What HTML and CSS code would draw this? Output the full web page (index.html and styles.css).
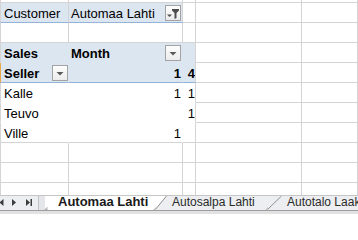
FILE: index.html
```html
<!DOCTYPE html>
<html>
<head>
<meta charset="utf-8">
<link rel="stylesheet" href="styles.css">
</head>
<body>
<div class="sheet">
  <div class="row top"><div class="c"></div><div class="c"></div><div class="c"></div><div class="c"></div><div class="c"></div></div>
  <div class="row">
    <div class="c pv pv-line">Customer</div>
    <div class="c pv pv-line btn-cell">Automaa Lahti
      <span class="dd"><svg width="14" height="14" viewBox="0 0 14 14"><polygon points="6,3 13,3 13,4.5 10.5,7 10.5,12 8.5,13 8.5,7 6,4.5" fill="#4d4d4d"/><polygon points="1,8.5 6,8.5 3.5,11" fill="#4d4d4d"/></svg></span>
    </div>
    <div class="c"></div><div class="c"></div><div class="c"></div>
  </div>
  <div class="row"><div class="c"></div><div class="c"></div><div class="c"></div><div class="c"></div><div class="c"></div></div>
  <div class="row">
    <div class="c pv nr nb b">Sales</div>
    <div class="c pv nr nb b btn-cell">Month
      <span class="dd"><svg width="14" height="14" viewBox="0 0 14 14"><polygon points="3.5,6 10.5,6 7,9.5" fill="#595959"/></svg></span>
    </div>
    <div class="c pv nb"></div><div class="c"></div><div class="c"></div>
  </div>
  <div class="row">
    <div class="c pv nr pv-line b sel btn-cell seller">Seller
      <span class="dd"><svg width="14" height="14" viewBox="0 0 14 14"><polygon points="3.5,6 10.5,6 7,9.5" fill="#595959"/></svg></span>
    </div>
    <div class="c pv nr pv-line b num">1</div>
    <div class="c pv pv-line b num0">4</div>
    <div class="c"></div><div class="c"></div>
  </div>
  <div class="row">
    <div class="c nr nb">Kalle</div>
    <div class="c nr nb num">1</div>
    <div class="c nb num0">1</div>
    <div class="c"></div><div class="c"></div>
  </div>
  <div class="row">
    <div class="c nr nb">Teuvo</div>
    <div class="c nr nb num"></div>
    <div class="c nb num0">1</div>
    <div class="c"></div><div class="c"></div>
  </div>
  <div class="row">
    <div class="c nr">Ville</div>
    <div class="c nr num">1</div>
    <div class="c num0"></div>
    <div class="c"></div><div class="c"></div>
  </div>
  <div class="row"><div class="c"></div><div class="c"></div><div class="c"></div><div class="c"></div><div class="c"></div></div>
  <div class="row"><div class="c"></div><div class="c"></div><div class="c"></div><div class="c"></div><div class="c"></div></div>
  <div class="row last"><div class="c"></div><div class="c"></div><div class="c"></div><div class="c"></div><div class="c"></div></div>
</div>
<div class="tabbar">
  <svg class="nav" width="38" height="14" viewBox="0 0 38 14">
    <polygon points="3.5,3 3.5,10 -0.5,6.5" fill="#3c3c3c"/>
    <polygon points="12,3 12,10 16,6.5" fill="#3c3c3c"/>
    <polygon points="26,3 26,10 30,6.5" fill="#3c3c3c"/>
    <rect x="30.5" y="3" width="1.5" height="7" fill="#3c3c3c"/>
  </svg>
  <svg class="split" width="10" height="14" viewBox="0 0 10 14">
    <rect x="0" y="0" width="7" height="14" fill="#e4e6e9"/>
    <rect x="0" y="0" width="1" height="14" fill="#c2c2c2"/>
    <rect x="7" y="0" width="3" height="14" fill="#ffffff"/>
    <polygon points="6,14 9.5,14 9.5,10.5" fill="#b9b9b9"/>
  </svg>
  <div class="tab active">Automaa Lahti</div>
  <svg class="slant" width="14" height="14" viewBox="0 0 14 14">
    <polygon points="0,0 13,0 2,14 0,14" fill="#ffffff"/>
    <line x1="2" y1="14" x2="13.5" y2="0" stroke="#8f8f8f" stroke-width="1"/>
    <polygon points="0,14 3,14 3,11" fill="#c4c4c4"/>
  </svg>
  <div class="tab t1">Autosalpa Lahti</div>
  <svg class="slant" width="17" height="14" viewBox="0 0 17 14">
    <line x1="2" y1="14" x2="16.5" y2="0" stroke="#8f8f8f" stroke-width="1"/>
    <polygon points="0,14 3,14 3,11" fill="#c4c4c4"/>
  </svg>
  <div class="tab t2">Autotalo Laak</div>
</div>
<div class="tabfoot"></div>
</body>
</html>
```

FILE: styles.css
```css
body {
  margin: 0;
  width: 358px;
  height: 214px;
  overflow: hidden;
  background: #ffffff;
  font-family: "Liberation Sans", Arial, sans-serif;
  font-size: 13px;
  color: #000000;
}

.row {
  display: grid;
  grid-template-columns: 69px 114px 13px 106px 1fr;
  height: 20px;
}

.row.top { height: 3px; }
.row.last { height: 12px; }

.c {
  box-sizing: border-box;
  display: flex;
  align-items: flex-end;
  line-height: 16px;
  padding: 0 2px;
  white-space: nowrap;
  overflow: hidden;
  min-width: 0;
  border-right: 1px solid #d4d4d4;
  border-bottom: 1px solid #d4d4d4;
}

.c:first-child {
  border-left: 1px solid #d4d4d4;
  padding-left: 3px;
}

.row.last .c { border-bottom: none; }

.pv { background: #dce6f1; }
.pv-line { border-bottom-color: #95b3d7; }
.nr { border-right-color: transparent; }
.nb { border-bottom-color: transparent; }
.c.sel { border-left-color: #e9a94b; }

.b { font-weight: bold; }

.num { justify-content: flex-end; padding-right: 1px; }
.num0 { justify-content: flex-end; padding-right: 0; }

.btn-cell { padding-right: 0; }

.dd {
  box-sizing: border-box;
  width: 16px;
  height: 16px;
  border: 1px solid #a3a3a3;
  background: linear-gradient(#fdfdfd, #ececec);
  align-self: center;
  margin-left: auto;
  margin-right: 1px;
  display: flex;
}

.seller .dd { margin-right: 0; }

.tabbar {
  display: flex;
  height: 14px;
  border-top: 1px solid #c6c6c6;
  border-bottom: 1px solid #9e9e9e;
  background: #eceef1;
  overflow: hidden;
}

.tabbar svg { flex: none; display: block; }

.tab {
  box-sizing: border-box;
  flex: none;
  height: 14px;
  line-height: 12px;
  white-space: nowrap;
  font-size: 12px;
  color: #2a2a2a;
}

.tab.active {
  width: 105px;
  padding-left: 10px;
  background: #ffffff;
  font-size: 13px;
  font-weight: bold;
  color: #1a1a1a;
}

.tab.t1 {
  width: 98px;
  padding-left: 5px;
}

.tab.t2 {
  padding-left: 5px;
}

.tabfoot {
  height: 3px;
  background: #e2e2e2;
}
```
